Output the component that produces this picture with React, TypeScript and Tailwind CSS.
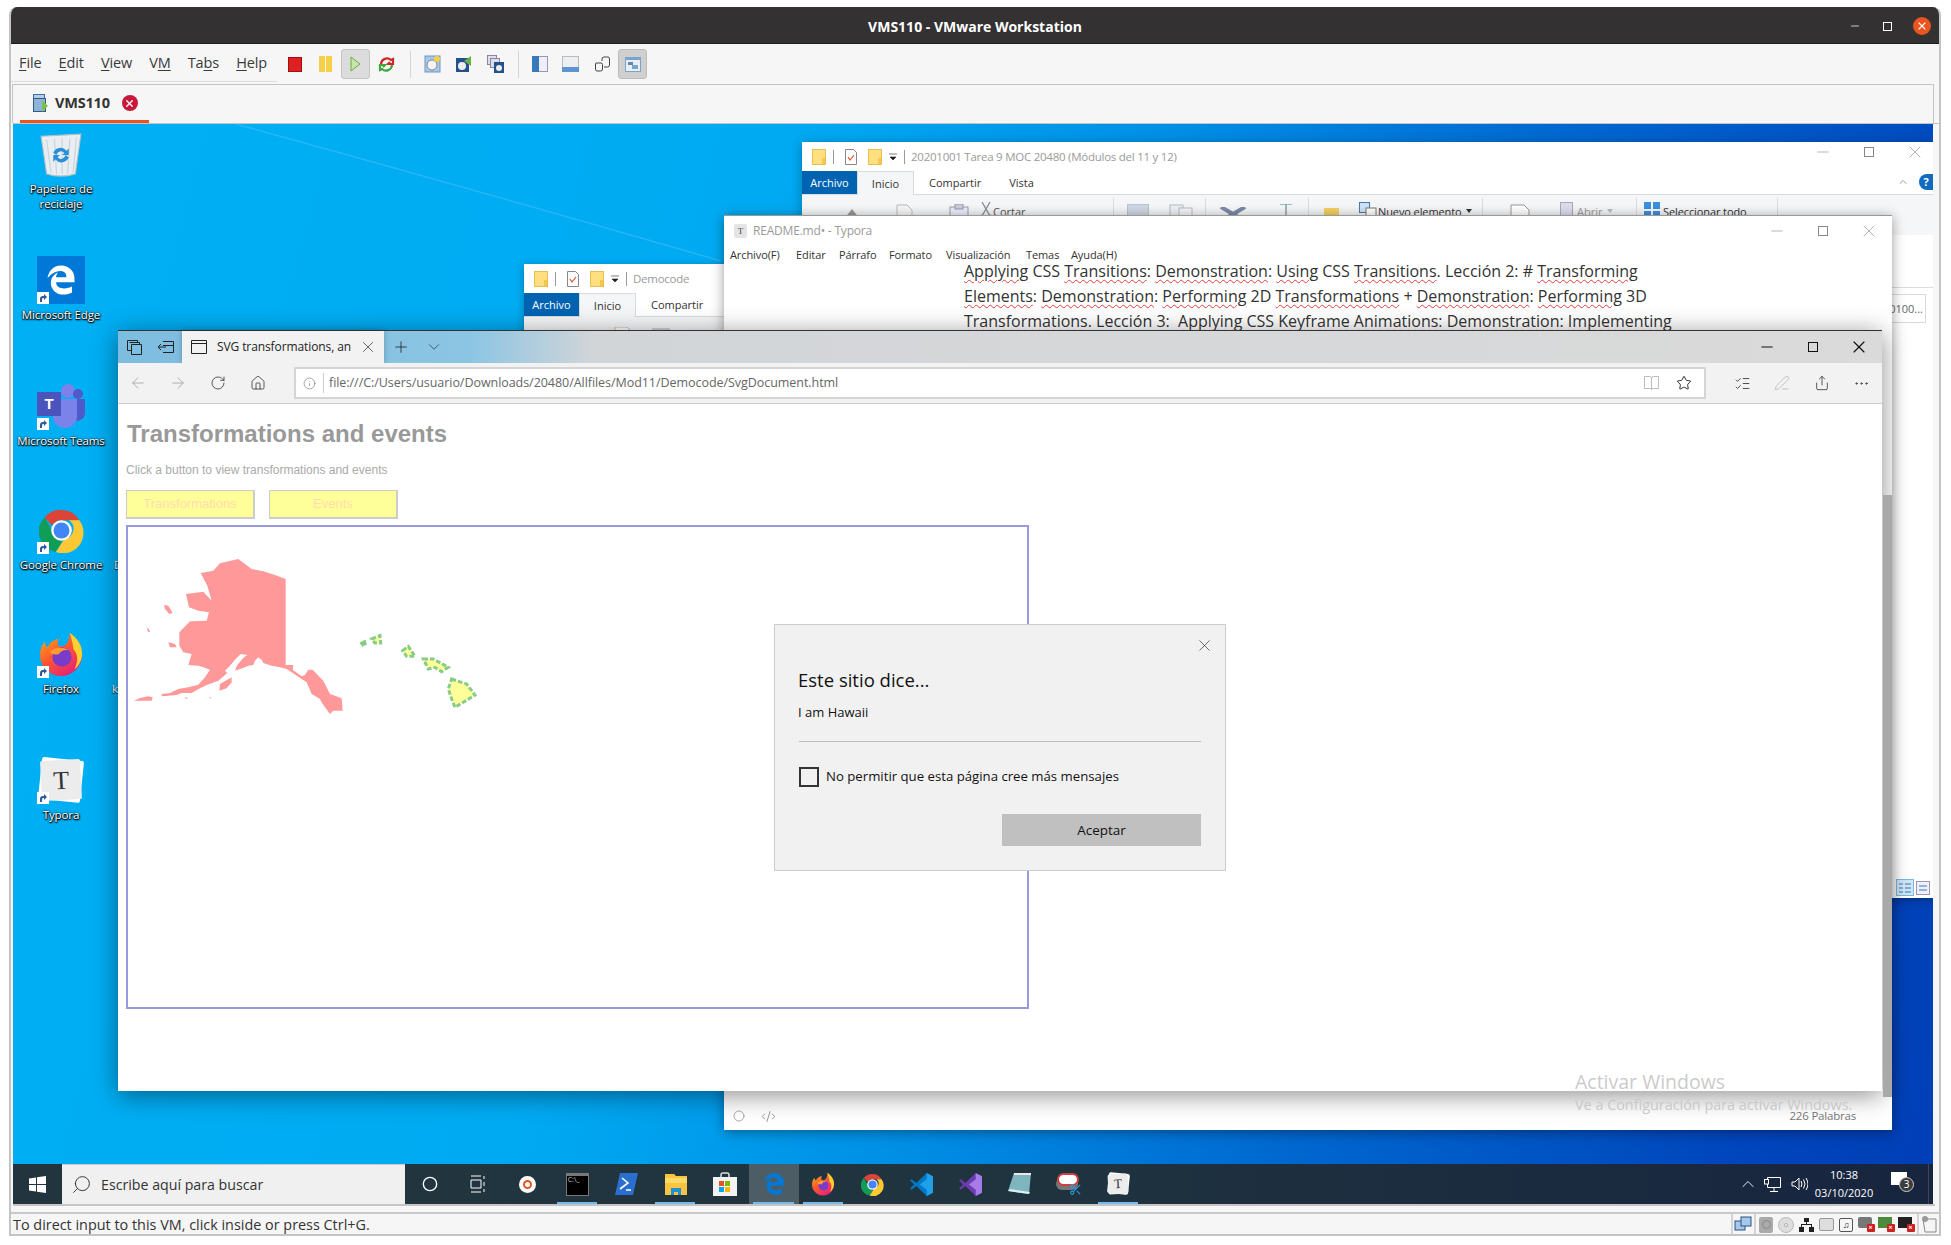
import React from "react";
import { ArrowLeft, ArrowRight, RotateCw, Home, Info, Star, Share, PenLine, Plus, ChevronDown, ChevronUp, Search, X, Minus, Code2, Circle, MoreHorizontal, Scissors, ListChecks } from "lucide-react";
import { FaEdgeLegacy } from "react-icons/fa";

function WinCtl({ tone, strong }: { tone: string; strong?: boolean }) {
  const sw = strong ? 1.4 : 0.8;
  return (
    <div className={`flex items-center ${tone}`}>
      <div className="w-[46px] flex justify-center"><Minus size={18} strokeWidth={sw} /></div>
      <div className="w-[46px] flex justify-center"><div className={`w-[10px] h-[10px] border-current ${strong ? "border-[1.5px]" : "border"}`} /></div>
      <div className="w-[46px] flex justify-center"><X size={20} strokeWidth={sw} /></div>
    </div>
  );
}

function Folder({ s = 14 }: { s?: number }) {
  return (
    <svg width={s} height={s + 2} viewBox="0 0 14 16"><rect x="0.5" y="0.5" width="13" height="15" fill="#ffdf80" stroke="#e8bf50" /><rect x="10" y="9" width="3" height="6" fill="#f4c84c" /></svg>
  );
}
function NoteCheck() {
  return (
    <svg width="12" height="16" viewBox="0 0 12 16"><path d="M.5.5h8l3 3v12H.5z" fill="#fff" stroke="#888" /><path d="M3 8l2 3 4-5" fill="none" stroke="#e0542a" strokeWidth="1.2" /></svg>
  );
}

function QuickAccess({ title }: { title: string }) {
  return (
    <div className="h-[30px] flex items-center pl-[10px] shrink-0">
      <Folder />
      <div className="w-px h-[14px] bg-[#999] ml-[7px] mr-[11px]" />
      <NoteCheck />
      <div className="ml-[11px]"><Folder /></div>
      <svg className="ml-[7px]" width="8" height="8" viewBox="0 0 8 8"><path d="M0 1h8M1 4h6l-3 3z" fill="#222" stroke="#222" strokeWidth=".6" /></svg>
      <div className="w-px h-[14px] bg-[#999] ml-[7px] mr-[6px]" />
      <span className="text-[11.5px] text-[#9a9a9a] whitespace-nowrap tracking-[-0.25px]">{title}</span>
    </div>
  );
}

function Ribbon({ vista }: { vista?: boolean }) {
  return (
    <div className="h-[23px] flex items-end border-b border-[#dadbdc] shrink-0 text-[11px] text-[#333]">
      <div className="w-[55px] h-[23px] bg-[#0063b1] text-white flex items-center justify-center pt-[2px]">Archivo</div>
      <div className="w-[57px] h-[24px] -mb-px bg-[#f5f6f7] border border-b-0 border-[#dadbdc] flex items-center justify-center pt-[2px]">Inicio</div>
      <div className="ml-[15px] h-[23px] flex items-center pt-[2px]">Compartir</div>
      {vista && <div className="ml-[28px] h-[23px] flex items-center pt-[2px]">Vista</div>}
    </div>
  );
}

function RibSep({ ml }: { ml: string }) {
  return <div className={`w-px h-[30px] bg-[#dcdcdc] -mt-[6px] shrink-0 ${ml}`} />;
}

function RibbonBack() {
  return (
    <div className="h-[40px] bg-[#f5f6f7] flex items-start pt-[9px] text-[11px] text-[#555] whitespace-nowrap">
      <svg className="ml-[42px] mt-[5px] shrink-0" width="16" height="10" viewBox="0 0 16 10"><path d="M8 0l8 10H0z" fill="#999" /></svg>
      <svg className="ml-[35px] shrink-0" width="20" height="18" viewBox="0 0 20 18"><path d="M2 1h10l5 5v12H2z" fill="#f7f7f7" stroke="#bbb" /></svg>
      <svg className="ml-[33px] shrink-0" width="22" height="18" viewBox="0 0 22 18"><rect x="2" y="3" width="18" height="15" fill="#eef" stroke="#99a" /><rect x="7" y="0" width="8" height="5" fill="#ccd" stroke="#99a" /></svg>
      <svg className="ml-[9px] -mt-[2px] shrink-0" width="14" height="18" viewBox="0 0 14 18"><path d="M3 0l8 14M11 0L3 14" stroke="#889" strokeWidth="1.3" /><circle cx="3" cy="15" r="2" fill="none" stroke="#889" /><circle cx="11" cy="15" r="2" fill="none" stroke="#889" /></svg>
      <span className="w-[120px] shrink-0">Cortar</span>
      <RibSep ml="" />
      <div className="ml-[13px] w-[22px] h-[18px] bg-[#cfd8e4] border border-[#b8c4d2] shrink-0" />
      <svg className="ml-[20px] shrink-0" width="24" height="18" viewBox="0 0 24 18"><rect x="1" y="1" width="13" height="17" fill="#eef1f5" stroke="#b6bcc6" /><rect x="10" y="4" width="13" height="14" fill="#f6f6f6" stroke="#b6bcc6" /></svg>
      <RibSep ml="ml-[12px]" />
      <svg className="ml-[13px] mt-[3px] shrink-0" width="28" height="14" viewBox="0 0 28 14"><path d="M2 0l24 14M26 0L2 14" stroke="#7b8aa8" strokeWidth="4" /></svg>
      <svg className="ml-[18px] shrink-0" width="30" height="18" viewBox="0 0 30 18"><path d="M2 12h26M15 0h12M21 0v12" stroke="#8aa" strokeWidth="1.6" fill="none" /></svg>
      <RibSep ml="ml-[13px]" />
      <div className="ml-[15px] mt-[4px] w-[15px] h-[14px] bg-[#f4d160] shrink-0" />
      <svg className="ml-[20px] -mt-[2px] shrink-0" width="18" height="18" viewBox="0 0 18 18"><rect x=".5" y=".5" width="10" height="10" fill="#cfe3f7" stroke="#4a79b0" /><rect x="7" y="6" width="10" height="12" fill="#fff" stroke="#777" /></svg>
      <span className="ml-[1px] w-[88px] shrink-0 text-[#333] tracking-[-0.1px]">Nuevo elemento</span>
      <svg className="mt-[5px] shrink-0" width="6" height="4" viewBox="0 0 6 4"><path d="M0 0h6L3 4z" fill="#333" /></svg>
      <RibSep ml="ml-[10px]" />
      <svg className="ml-[26px] shrink-0" width="22" height="18" viewBox="0 0 22 18"><path d="M2 1h13l5 5v12H2z" fill="#fff" stroke="#999" /></svg>
      <svg className="ml-[29px] -mt-[2px] shrink-0" width="13" height="18" viewBox="0 0 13 18"><rect x=".5" y=".5" width="12" height="17" fill="#dde" stroke="#aab" /></svg>
      <span className="ml-[4px] w-[28px] shrink-0 text-[#999]">Abrir</span>
      <svg className="ml-[2px] mt-[5px] shrink-0" width="6" height="4" viewBox="0 0 6 4"><path d="M0 0h6L3 4z" fill="#bbb" /></svg>
      <RibSep ml="ml-[23px]" />
      <svg className="ml-[7px] -mt-[2px] shrink-0" width="16" height="16" viewBox="0 0 16 16"><path d="M0 0h7v7H0zM9 0h7v7H9zM0 9h7v7H0zM9 9h7v7H9z" fill="#3c8fe0" /></svg>
      <span className="ml-[3px] w-[90px] shrink-0 text-[#333] tracking-[-0.1px]">Seleccionar todo</span>
      <RibSep ml="ml-[24px]" />
    </div>
  );
}

function Sp({ children }: { children: React.ReactNode }) {
  return <span className="underline decoration-wavy decoration-[#e04040] decoration-1 underline-offset-2">{children}</span>;
}

function ChromeIcon({ s }: { s: number }) {
  return (
    <svg width={s} height={s} viewBox="0 0 48 48">
      <path d="M24 2a22 22 0 0 1 19 11H24a11 11 0 0 0-10 6L6 10A22 22 0 0 1 24 2z" fill="#db4437" />
      <path d="M6 10l9 16a11 11 0 0 0 10 9l-7 12A22 22 0 0 1 6 10z" fill="#0f9d58" />
      <path d="M43 13a22 22 0 0 1-25 34l9-14a11 11 0 0 0 5-20z" fill="#fcc934" />
      <circle cx="24" cy="24" r="11" fill="#fff" />
      <circle cx="24" cy="24" r="8.5" fill="#4285f4" />
    </svg>
  );
}
function FirefoxIcon({ s, id }: { s: number; id: string }) {
  return (
    <svg width={s} height={s} viewBox="0 0 48 48">
      <defs>
        <linearGradient id={id} x1="0" y1="0" x2="0.7" y2="1"><stop offset="0" stopColor="#ffb520" /><stop offset=".5" stopColor="#ff5a2c" /><stop offset="1" stopColor="#e6207a" /></linearGradient>
      </defs>
      <path d="M33 2c6 5 13 13 13 23a22 22 0 0 1-44 0c0-6 2-10 5-14 0 3 1 5 3 6 2-5 6-8 12-9-2 3-2 6 0 8 5 0 10 0 11-14z" fill={`url(#${id})`} />
      <path d="M33 2c7 4 14 13 13 24-1 6-4 11-8 14 4-8 4-16-1-21-1-7-2-12-4-17z" fill="#ffd030" />
      <circle cx="25" cy="27" r="10" fill="#7a3cc8" />
      <path d="M12 22c5-5 13-6 20-2-5-1-9 1-10 4-3 1-7 1-10-2z" fill="#ff9a2c" />
    </svg>
  );
}
function TyporaIcon({ s }: { s: number }) {
  const fs = Math.round(s * 0.55);
  return (
    <div className="relative" style={{ width: s, height: s }}>
      <div className="absolute inset-[6%] bg-white rotate-6 rounded-[2px]" />
      <div className="absolute inset-[8%] bg-[#ececec] -rotate-3 rounded-[2px] flex items-center justify-center font-['Liberation_Serif',serif] text-[#333]" style={{ fontSize: fs }}>T</div>
    </div>
  );
}
function Shortcut() {
  return (
    <div className="absolute left-0 bottom-0 w-[12px] h-[12px] bg-white flex items-center justify-center">
      <svg width="10" height="10" viewBox="0 0 10 10"><path d="M2 9V6q0-3 3-3h1V1l3 3-3 3V5H5Q4 5 4 7v2z" fill="#2c5a9a" /></svg>
    </div>
  );
}

function DeskIcon({ top, lines, children, arrow = true }: { top: number; lines: string[]; children: React.ReactNode; arrow?: boolean }) {
  return (
    <div className="absolute left-0 w-[96px] flex flex-col items-center" style={{ top }}>
      <div className="relative w-[48px] h-[48px] flex items-center justify-center">
        {children}
        {arrow && <Shortcut />}
      </div>
      <div className="mt-[3px] text-center text-white text-[11.5px] leading-[15px] tracking-[-0.1px] [text-shadow:0_1px_1px_#000,0_0_2px_#000,1px_1px_2px_#000] whitespace-nowrap">
        {lines.map((l) => <div key={l}>{l}</div>)}
      </div>
    </div>
  );
}

function TeamsIcon() {
  return (
    <svg width="48" height="44" viewBox="0 0 48 44">
      <circle cx="31" cy="7" r="7" fill="#7b83eb" />
      <circle cx="41" cy="10" r="5" fill="#5059c9" />
      <path d="M34 15h14v14a8 8 0 0 1-14 5z" fill="#5059c9" />
      <path d="M16 15h24v17a12 12 0 0 1-24 0z" fill="#7b83eb" />
    </svg>
  );
}

function Cell({ children, mark, active }: { children: React.ReactNode; mark?: boolean; active?: boolean }) {
  return (
    <div className={`relative w-[49.2px] h-[40px] flex items-center justify-center ${active ? "bg-[#4d5d66]" : ""}`}>
      {children}
      {mark && <div className="absolute bottom-0 left-[4px] right-[5px] h-[2px] bg-[#76b9ed]" />}
    </div>
  );
}

function VsCode({ s, a, b }: { s: number; a: string; b: string }) {
  return (
    <svg width={s} height={s} viewBox="0 0 24 24">
      <path d="M17 1l6 3v16l-6 3-10-9.5L2.5 17 1 15.8 5 12 1 8.2l1.5-1.2L7 10.500z" fill={a} />
      <path d="M17 1l6 3v16l-6 3zM17 7l-6.500 5 6.500 5z" fill={b} fillRule="evenodd" />
    </svg>
  );
}

function Taskbar() {
  return (
    <div className="absolute left-0 right-0 bottom-0 h-[40px] flex items-center bg-[linear-gradient(90deg,#22353f_0%,#20343f_50%,#17253f_100%)] text-white">
      <div className="w-[49px] h-full flex items-center justify-center">
        <svg width="17" height="17" viewBox="0 0 17 17"><path d="M0 2.500l7-1v6.500H0zM8 1.300L17 0v8H8zM0 9h7v6.500l-7-1zM8 9h9v8l-9-1.300z" fill="#fff" /></svg>
      </div>
      <div className="w-[343px] h-full bg-[#f0f0f0] flex items-center text-[#333] border-t border-[#ccc]">
        <Search size={21} strokeWidth={1.1} className="ml-[9px] -scale-x-100" />
        <span className="ml-[9px] text-[14.2px]">Escribe aquí para buscar</span>
      </div>
      <Cell><Circle size={16} strokeWidth={2} /></Cell>
      <Cell>
        <svg width="18" height="18" viewBox="0 0 18 18" fill="none" stroke="#fff"><path d="M1 1h10M1 17h10M1 5h10v8H1zM14 1v3M14 7v4M14 14v3" /></svg>
      </Cell>
      <Cell>
        <div className="w-[17px] h-[17px] rounded-full bg-white flex items-center justify-center"><div className="w-[9px] h-[9px] rounded-full border-2 border-[#e95420]" /></div>
      </Cell>
      <Cell mark>
        <div className="w-[23px] h-[23px] bg-black border-t-[3px] border-[#777] border-x border-b text-[7px] leading-[8px] pl-[1px] text-[#ccc]">C:\_</div>
      </Cell>
      <Cell>
        <svg width="23" height="24" viewBox="0 0 23 24"><path d="M5 1h18l-5 22H0z" fill="#2a6fd0" /><path d="M7 6l6 5-8 6M11 18h5" stroke="#fff" strokeWidth="1.6" fill="none" /></svg>
      </Cell>
      <Cell mark>
        <svg width="22" height="24" viewBox="0 0 22 24"><path d="M0 2h9l2 2h11v19H0z" fill="#f9c440" /><path d="M0 6h22v5H0z" fill="#ffd966" /><path d="M6 23v-7h10v7h-3v-3H9v3z" fill="#1f8fd8" /></svg>
      </Cell>
      <Cell>
        <svg width="24" height="24" viewBox="0 0 24 24"><path d="M8 5V3a2 2 0 0 1 2-2h4a2 2 0 0 1 2 2v2" fill="none" stroke="#ddd" strokeWidth="1.500" /><path d="M0 5h24v19H0z" fill="#f3f3f3" /><path d="M6 9h5v5H6z" fill="#e8512a" /><path d="M12 9h5v5h-5z" fill="#7fba00" /><path d="M6 15h5v5H6z" fill="#00a4ef" /><path d="M12 15h5v5h-5z" fill="#ffb900" /></svg>
      </Cell>
      <Cell mark active><FaEdgeLegacy size={22} color="#0078d7" /></Cell>
      <Cell mark><FirefoxIcon s={24} id="ff2" /></Cell>
      <Cell><ChromeIcon s={23} /></Cell>
      <Cell><VsCode s={25} a="#0078c8" b="#20a0e8" /></Cell>
      <Cell><VsCode s={25} a="#6c3cb0" b="#a87ce8" /></Cell>
      <Cell>
        <svg width="24" height="24" viewBox="0 0 24 24"><path d="M6 1h17l-2 21L0 19z" fill="#7fb5bf" /><path d="M0 19l21 3 1-2-20-3z" fill="#d8eef0" /><path d="M6 1h17v2H6z" fill="#e8e8e8" /></svg>
      </Cell>
      <Cell>
        <div className="relative w-[26px] h-[24px]">
          <div className="absolute left-0 top-[6px] w-[22px] h-[12px] rounded-full bg-[#777]" />
          <div className="absolute left-[1px] top-[1px] w-[22px] h-[13px] rounded-full bg-white border-2 border-[#d04040]" />
          <Scissors size={13} color="#2a9ad8" className="absolute right-0 bottom-0" />
        </div>
      </Cell>
      <Cell mark><TyporaIcon s={24} /></Cell>
      <div className="ml-auto flex items-center h-full">
        <ChevronUp size={20} strokeWidth={1.1} />
        <svg className="ml-[6px]" width="17" height="15" viewBox="0 0 17 15" fill="none" stroke="#fff"><path d="M3.500 2.500V.5h13v10h-13V7M6 14.500h8M10 10.500v4" /><rect x=".5" y="2.500" width="4" height="4.500" /></svg>
        <svg className="ml-[10px]" width="17" height="14" viewBox="0 0 17 14" fill="none" stroke="#fff"><path d="M1 5h3l4-4v12l-4-4H1zM10 4q2 3 0 6M12.500 2.500q3 4.500 0 9M15 1q4 6 0 12" /></svg>
        <div className="ml-[5px] w-[62px] flex flex-col items-center text-[11px] leading-[18px]">
          <span>10:38</span>
          <span className="whitespace-nowrap">03/10/2020</span>
        </div>
        <div className="relative ml-[16px] w-[18px] h-[18px] mb-[6px]">
          <div className="w-[16px] h-[13px] bg-white" />
          <div className="absolute left-[8px] top-[5px] w-[15px] h-[15px] rounded-full bg-[#3c3c3c] border border-[#ccc] text-[10px] leading-[13px] text-center">3</div>
        </div>
        <div className="ml-[19px] w-px h-full bg-[#445]" />
        <div className="w-[4px]" />
      </div>
    </div>
  );
}

function Explorer() {
  return (
    <div className="absolute left-[789px] top-[18px] w-[1131px] h-[756px] bg-white shadow-[0_2px_10px_rgba(0,0,0,.3)] flex flex-col overflow-hidden">
      <div className="flex justify-between">
        <QuickAccess title="20201001 Tarea 9 MOC 20480 (Módulos del 11 y 12)" />
        <div className="-mr-[5px]"><WinCtl tone="text-[#888]" /></div>
      </div>
      <div className="relative">
        <Ribbon vista />
        <div className="absolute right-0 top-[2px] flex items-center gap-[10px]">
          <ChevronUp size={12} color="#999" />
          <div className="w-[14px] h-[16px] rounded-l-full bg-[#0f6ac0] text-white text-[11px] font-bold leading-[16px] text-center">?</div>
        </div>
      </div>
      <RibbonBack />
      <div className="border-t border-[#dcdcdc] mt-[52px] flex justify-end pt-[6px] pr-[7px]">
        <div className="w-[40px] h-[29px] border border-[#d9d9d9] text-[11px] text-[#666] leading-[27px] text-right pr-[2px]">0100...</div>
      </div>
      <div className="mt-auto h-[21px] flex justify-end items-center pr-[3px] gap-[2px]">
        <svg width="18" height="17" viewBox="0 0 18 17"><rect x=".5" y=".5" width="17" height="16" fill="#cfe6f7" stroke="#7cb8e0" /><path d="M3 5h4M9 5h6M3 9h4M9 9h6M3 13h4M9 13h6" stroke="#3878b0" /></svg>
        <svg width="14" height="14" viewBox="0 0 14 14"><rect x=".5" y=".5" width="13" height="13" fill="#eef" stroke="#99a" /><path d="M3 5h8M3 9h8" stroke="#3878b0" /></svg>
      </div>
    </div>
  );
}

function Democode() {
  return (
    <div className="absolute left-[511px] top-[140px] w-[240px] h-[90px] bg-white shadow-[0_2px_8px_rgba(0,0,0,.3)] flex flex-col">
      <QuickAccess title="Democode" />
      <Ribbon />
      <div className="flex-1 bg-[#f5f6f7] flex items-start pl-[90px] pt-[10px] gap-[20px]">
        <svg width="18" height="10" viewBox="0 0 18 10"><path d="M1 0h12l4 4v6H1z" fill="#fff" stroke="#bbb" /></svg>
        <svg width="18" height="10" viewBox="0 0 18 10"><rect x="1" y="2" width="16" height="8" fill="#eef" stroke="#aab" /></svg>
      </div>
    </div>
  );
}

function Typora() {
  return (
    <div className="absolute left-[711px] top-[91px] w-[1168px] h-[915px] bg-white shadow-[0_2px_12px_rgba(0,0,0,.4)] flex flex-col border-t border-[#999] overflow-hidden">
      <div className="h-[29px] flex items-center shrink-0">
        <div className="ml-[10px] w-[13px] h-[14px] bg-[#e4e4e4] rounded-[2px] text-[9px] font-['Liberation_Serif',serif] text-[#444] text-center leading-[14px]">T</div>
        <span className="ml-[6px] text-[12px] text-[#9a9a9a] tracking-[-0.2px]">README.md• - Typora</span>
        <div className="ml-auto"><WinCtl tone="text-[#888]" /></div>
      </div>
      <div className="h-[20px] flex items-center pl-[6px] text-[11px] text-[#333] shrink-0 tracking-[-0.1px] relative z-10 bg-white">
        <span className="w-[66px]">Archivo(F)</span>
        <span className="w-[43px]">Editar</span>
        <span className="w-[50px]">Párrafo</span>
        <span className="w-[57px]">Formato</span>
        <span className="w-[80px]">Visualización</span>
        <span className="w-[45px]">Temas</span>
        <span>Ayuda(H)</span>
      </div>
      <div className="flex-1 pl-[240px] text-[16px] leading-[25px] text-[#333] whitespace-pre -mt-[6px] overflow-hidden">
        <div><Sp>Applying</Sp> CSS <Sp>Transitions</Sp>: <Sp>Demonstration</Sp>: <Sp>Using</Sp> CSS <Sp>Transitions</Sp>. Lección 2: # <Sp>Transforming</Sp></div>
        <div><Sp>Elements</Sp>: <Sp>Demonstration</Sp>: <Sp>Performing</Sp> 2D <Sp>Transformations</Sp> + <Sp>Demonstration</Sp>: <Sp>Performing</Sp> 3D</div>
        <div><Sp>Transformations</Sp>. Lección 3:  <Sp>Applying</Sp> CSS <Sp>Keyframe</Sp> <Sp>Animations</Sp>: <Sp>Demonstration</Sp>: <Sp>Implementing</Sp></div>
      </div>
      <div className="h-[28px] flex items-center shrink-0 text-[#777]">
        <Circle size={12} strokeWidth={1.2} className="ml-[9px]" />
        <Code2 size={15} strokeWidth={1.2} className="ml-[16px]" />
        <span className="ml-auto mr-[36px] text-[11.5px] tracking-[-0.2px]">226 Palabras</span>
      </div>
    </div>
  );
}

function Hawaii() {
  const isl = [
    "995,420 1040,435 1065,468 1030,490 1005,505 995,480 985,450",
    "910,360 940,360 985,385 965,398 945,385 925,390",
    "848,335 865,322 885,352 860,352",
    "755,300 780,290 782,312 765,312",
  ];
  return (
    <g fill="#ffff99" stroke="#88cc88" strokeWidth="9" strokeDasharray="14 6">
      {isl.map((p) => <polygon key={p} points={p} />)}
      <polygon points="722,312 735,305 738,315 728,320" fill="#88cc88" strokeDasharray="none" strokeWidth="5" />
    </g>
  );
}

function MapSvg() {
  return (
    <svg width="899" height="480" viewBox="-1 0 899 480" className="block">
      <g transform="translate(-9 12) scale(0.3333)">
        <g fill="#ff9999">
          <path d="M497 120V378H520L518 392L545 412L555 408L565 392L578 392L610 425L630 465L665 478L668 515L640 515L630 525L615 505L605 490L600 480L575 465L560 430L545 420L515 400L500 390L480 385L455 380L430 372L425 362L415 355L405 365L400 378L385 380L375 385L345 395L352 378L372 355L382 348L362 345L345 362L330 380L315 395L322 402L295 425L262 437L240 448L215 462L185 462L170 468L145 470L125 472L125 465L150 462L175 450L205 445L235 437L255 415L270 392L250 385L235 380L205 378L215 345L190 340L178 320L178 280L210 247L260 245L267 220L235 215L207 205L198 165L250 158L275 185L262 140L242 102L280 95L300 73L355 60L395 90L430 97L465 108Z" />
          <path d="M132 198L145 200L158 222L148 225L135 210Z" />
          <path d="M145 310L165 315L170 325L150 325Z" />
          <path d="M80 268L85 268L90 278L85 280Z" />
          <path d="M300 435L335 415L335 430L320 448L298 455Z" />
          <path d="M42 485L60 477L85 472L98 475L95 485L60 485Z" />
          <path d="M192 475L205 477L200 480Z" />
          <path d="M270 473L275 478L268 478Z" />
        </g>
        <Hawaii />
      </g>
    </svg>
  );
}

function Browser() {
  return (
    <div className="absolute left-[105px] top-[206px] w-[1764px] h-[761px] flex flex-col shadow-[0_4px_24px_rgba(0,0,0,.45)] border-t border-[#333] bg-white">
      <div className="h-[32px] flex items-end shrink-0 bg-[linear-gradient(90deg,#7dbde0_0%,#8cc5e3_20%,#d2d5d8_27%,#dadada_100%)] text-[#222]">
        <div className="w-[64px] h-full flex items-center pl-[9px] gap-[16px]">
          <svg width="15" height="15" viewBox="0 0 15 15" fill="none" stroke="#222"><path d="M.5.5h10v2M2.500 2.500h10v2M4.500 4.500h10v10h-10z" /><path d="M.5.500v10h4" /></svg>
          <svg width="16" height="12" viewBox="0 0 16 12" fill="none" stroke="#222"><path d="M5 .5h10.500v11H5M5 4.500h10M0 6h8M3 3L0 6l3 3" /></svg>
        </div>
        <div className="w-[202px] h-full bg-[#f2f2f2] flex items-center pl-[9px] shadow-[0_0_6px_rgba(0,0,0,.25)]">
          <svg width="16" height="14" viewBox="0 0 16 14" fill="none" stroke="#222"><path d="M.5.5h15v13H.5zM.5 3.500h15" /></svg>
          <span className="ml-[10px] w-[134px] overflow-hidden whitespace-nowrap text-[12px] tracking-[-0.1px]">SVG transformations, an</span>
          <X size={18} strokeWidth={0.9} className="ml-[8px]" />
        </div>
        <div className="h-full flex items-center">
          <Plus size={18} strokeWidth={1.1} className="ml-[8px]" />
          <ChevronDown size={18} strokeWidth={0.9} className="ml-[15px]" />
        </div>
        <div className="ml-auto h-full flex items-center"><WinCtl tone="text-[#111]" strong /></div>
      </div>
      <div className="h-[41px] bg-[#f2f2f2] border-b border-[#ccc] flex items-center shrink-0 text-[#333]">
        <ArrowLeft size={18} strokeWidth={1} color="#999" className="ml-[11px]" />
        <ArrowRight size={18} strokeWidth={1} color="#999" className="ml-[22px]" />
        <RotateCw size={16} strokeWidth={1.2} className="ml-[23px]" />
        <Home size={16} strokeWidth={1.2} className="ml-[24px]" />
        <div className="ml-[28px] w-[1412px] h-[32px] bg-white border-2 border-[#d4d4d4] flex items-center">
          <Info size={13} strokeWidth={1.2} color="#777" className="ml-[7px]" />
          <div className="w-px h-[20px] bg-[#ccc] ml-[7px]" />
          <span className="ml-[5px] text-[12.5px] text-[#666] tracking-[-0.05px] whitespace-nowrap">file:///C:/Users/usuario/Downloads/20480/Allfiles/Mod11/Democode/SvgDocument.html</span>
          <svg className="ml-auto" width="15" height="14" viewBox="0 0 15 14" fill="none" stroke="#bbb"><path d="M.5.5h5q2 0 2 1.500v11.500q0-1-2-1h-5zM14.500.5h-5q-2 0-2 1.500M14.500.5v12h-5q-2 0-2 1" /></svg>
          <Star size={16} strokeWidth={1.3} color="#111" className="ml-[17px] mr-[12px]" />
        </div>
        <ListChecks size={17} strokeWidth={1.2} className="ml-[28px]" />
        <PenLine size={16} strokeWidth={1} color="#aaa" className="ml-[23px]" />
        <Share size={16} strokeWidth={1.2} className="ml-[24px]" />
        <MoreHorizontal size={17} strokeWidth={1.2} className="ml-[23px]" />
      </div>
      <div className="relative flex-1 pl-[8px] font-['Liberation_Sans',sans-serif]">
        <h1 className="mt-[16px] ml-[1px] text-[24px] leading-[28px] font-bold text-[#999]">Transformations and events</h1>
        <p className="mt-[15px] text-[12px] leading-[14px] text-[#aaa]">Click a button to view transformations and events</p>
        <div className="mt-[13px] flex gap-[14px]">
          <div className="w-[129px] h-[29px] bg-[#ffff99] border-r-2 border-b-2 border-[#ccc] border-l border-t text-[#ffdcb0] text-[13px] flex items-center justify-center">Transformations</div>
          <div className="w-[129px] h-[29px] bg-[#ffff99] border-r-2 border-b-2 border-[#ccc] border-l border-t text-[#ffdcb0] text-[13px] flex items-center justify-center">Events</div>
        </div>
        <div className="mt-[6px] w-[903px] h-[484px] border-2 border-[#9999dd]">
          <MapSvg />
        </div>
        <Dialog />
      </div>
    </div>
  );
}

function Dialog() {
  return (
    <div className="absolute left-[656px] top-[220px] w-[452px] h-[247px] bg-[#f1f1f1] border border-[#ccc] font-['Open_Sans',sans-serif] text-[#111] flex flex-col pl-[23px] pr-[24px]">
      <X size={19} strokeWidth={0.9} className="absolute right-[11px] top-[11px] text-[#333]" />
      <div className="mt-[42px] text-[18.5px] leading-[26px]">Este sitio dice...</div>
      <div className="mt-[10px] text-[13px] leading-[18px]">I am Hawaii</div>
      <div className="mt-[20px] h-px bg-[#bdbdbd] ml-[1px]" />
      <div className="mt-[25px] ml-[1px] flex items-center">
        <div className="w-[20px] h-[20px] border-2 border-[#333]" />
        <span className="ml-[7px] text-[13.2px] whitespace-nowrap">No permitir que esta página cree más mensajes</span>
      </div>
      <div className="mt-[27px] self-end w-[199px] h-[32px] bg-[#c0c0c0] text-[13.5px] flex items-center justify-center">Aceptar</div>
    </div>
  );
}

function Desktop() {
  return (
    <div className="relative w-[1920px] h-[1080px] overflow-hidden bg-[linear-gradient(105deg,#00b0f4_0%,#00aaf2_35%,#0090e6_52%,#0068d0_70%,#0046bc_90%,#003eb6_100%)]">
      <svg className="absolute inset-0" width="1920" height="1080" viewBox="0 0 1920 1080">
        <path d="M223 0Q470 68 708 137" stroke="#5ec6f4" strokeWidth="1.500" fill="none" opacity=".4" />
      </svg>
      <DeskIcon top={6} lines={["Papelera de", "reciclaje"]} arrow={false}>
        <svg width="42" height="48" viewBox="0 0 38 42">
          <path d="M1 5l36-2-5 36q-13 4-26 0z" fill="#e8eef2" stroke="#b5c0c8" />
          <path d="M6 8l4 30M13 7l2 32M20 7v32M27 7l-2 32M33 6l-3 32" stroke="#c9d3da" fill="none" />
          <path d="M12 20a7 7 0 0 1 12-2l2-2v6h-6l2-2a4 4 0 0 0-7 2zM26 24a7 7 0 0 1-12 2l-2 2v-6h6l-2 2a4 4 0 0 0 7-2z" fill="#2a8fd8" />
        </svg>
      </DeskIcon>
      <DeskIcon top={132} lines={["Microsoft Edge"]}>
        <div className="w-[48px] h-[48px] bg-[#0078d7] flex items-center justify-center"><FaEdgeLegacy size={30} color="#fff" /></div>
      </DeskIcon>
      <DeskIcon top={258} lines={["Microsoft Teams"]}>
        <TeamsIcon />
        <div className="absolute left-0 top-[10px] w-[24px] h-[24px] bg-[#4b53bc] text-white text-[15px] font-bold flex items-center justify-center font-['Liberation_Sans',sans-serif]">T</div>
      </DeskIcon>
      <DeskIcon top={382} lines={["Google Chrome"]}><ChromeIcon s={45} /></DeskIcon>
      <DeskIcon top={506} lines={["Firefox"]}><FirefoxIcon s={46} id="ff1" /></DeskIcon>
      <DeskIcon top={632} lines={["Typora"]}><TyporaIcon s={48} /></DeskIcon>
      <div className="absolute left-[101px] top-[433px] text-white text-[11.5px] leading-[15px] [text-shadow:0_1px_1px_#000]">D</div>
      <div className="absolute left-[99px] top-[557px] text-white text-[11.5px] leading-[15px] [text-shadow:0_1px_1px_#000]">k</div>
      <Democode />
      <Explorer />
      <Typora />
      <Browser />
      <div className="absolute left-[1562px] top-[945px] font-['Open_Sans',sans-serif] text-[#c4c4c4]/90 pointer-events-none">
        <div className="text-[19.5px] leading-[26px]">Activar Windows</div>
        <div className="text-[14.4px] leading-[20px] whitespace-nowrap">Ve a Configuración para activar Windows.</div>
      </div>
      <div className="absolute left-[1870px] top-[371px] w-[9px] h-[602px] bg-[#a9a9a9]" />
      <Taskbar />
    </div>
  );
}

function MenuItem({ pre = "", u, post = "" }: { pre?: string; u: string; post?: string }) {
  return <span>{pre}<u className="underline-offset-2">{u}</u>{post}</span>;
}

function Stat({ children }: { children: React.ReactNode }) {
  return <div className="w-[20px] h-[18px] flex items-center justify-center">{children}</div>;
}

export default function App() {
  const bad = <div className="absolute right-0 bottom-0 w-[8px] h-[8px] bg-[#d02020] text-white text-[7px] leading-[8px] text-center font-bold rounded-[1px]">×</div>;
  return (
    <div className="w-[1951px] h-[1245px] bg-white pt-[7px] pl-[9px] font-['Open_Sans','Noto_Sans',sans-serif] overflow-hidden">
      <div className="w-[1932px] h-[1229px] bg-[#f6f6f6] border-x-2 border-b-2 border-[#c4c4c4] rounded-t-[8px] flex flex-col overflow-hidden">
        <div className="h-[37px] bg-[#333132] border-b border-[#1c1c1c] flex items-center justify-center relative shrink-0 text-white text-[14px] font-bold pt-[2px]">
          <span>VMS110 - VMware Workstation</span>
          <div className="absolute right-[8px] top-[10px] flex items-center">
            <Minus size={12} strokeWidth={1.5} />
            <div className="ml-[22px] w-[9px] h-[9px] border border-white" />
            <div className="ml-[21px] w-[18px] h-[18px] rounded-full bg-[#e95420] flex items-center justify-center"><X size={12} strokeWidth={2.2} /></div>
          </div>
        </div>
        <div className="h-[40px] flex items-center shrink-0 text-[14.5px] text-[#3a3a3a]">
          <div className="flex items-center h-[38px] border-b border-[#ddd] w-[266px] gap-[17px] pl-[8px] tracking-[-0.1px] self-start">
            <MenuItem u="F" post="ile" />
            <MenuItem u="E" post="dit" />
            <MenuItem u="V" post="iew" />
            <MenuItem pre="V" u="M" />
            <MenuItem pre="Ta" u="b" post="s" />
            <MenuItem u="H" post="elp" />
          </div>
          <div className="ml-[11px] w-[14px] h-[15px] bg-[#e02020] border border-[#a01010]" />
          <div className="ml-[17px] flex gap-[1px]"><div className="w-[6px] h-[16px] bg-[#f7d04a]" /><div className="w-[6px] h-[16px] bg-[#f7d04a]" /></div>
          <div className="ml-[9px] w-[29px] h-[30px] bg-[#dcdcdc] border border-[#c4c4c4] rounded-[3px] flex items-center justify-center">
            <svg width="11" height="16" viewBox="0 0 11 16"><path d="M1 1l9 7-9 7z" fill="#c6e5a6" stroke="#6fa84a" /></svg>
          </div>
          <svg className="ml-[8px]" width="17" height="17" viewBox="0 0 17 17" fill="none"><path d="M3 8a6 6 0 0 1 10-4l2-1v5h-5l2-2" stroke="#d02828" strokeWidth="2.200" /><path d="M14 9a6 6 0 0 1-10 4l-2 1V9h5l-2 2" stroke="#3ea83e" strokeWidth="2.200" /></svg>
          <div className="ml-[15px] w-px h-[27px] bg-[#d4d4d4]" />
          <svg className="ml-[13px]" width="17" height="18" viewBox="0 0 17 18"><rect x="1" y="1" width="15" height="16" fill="#a8c8e8" stroke="#6f94bc" /><circle cx="8" cy="10" r="5" fill="#f4f4f4" stroke="#888" /><circle cx="13" cy="4" r="3" fill="#f7d04a" /></svg>
          <svg className="ml-[14px]" width="17" height="18" viewBox="0 0 17 18"><rect x="1" y="3" width="13" height="14" fill="#24508c" /><circle cx="7" cy="11" r="4" fill="#eee" /><path d="M16 1v10l-7-5z" fill="#6ab04a" /></svg>
          <svg className="ml-[15px]" width="17" height="18" viewBox="0 0 17 18"><rect x=".5" y=".5" width="9" height="9" fill="#dde" stroke="#889" /><rect x="3.500" y="3.500" width="9" height="9" fill="#dde" stroke="#889" /><rect x="7" y="7" width="10" height="11" fill="#24508c" /><circle cx="12" cy="13" r="3" fill="#eee" /></svg>
          <div className="ml-[14px] w-px h-[27px] bg-[#d4d4d4]" />
          <svg className="ml-[13px]" width="16" height="16" viewBox="0 0 16 16"><rect x=".5" y=".5" width="15" height="15" fill="#eef" stroke="#99a" /><rect x="0" y="0" width="7" height="16" fill="#3a78b8" /></svg>
          <svg className="ml-[14px]" width="17" height="16" viewBox="0 0 17 16"><rect x=".5" y=".5" width="16" height="15" fill="#eceff2" stroke="#bbb" /><rect x="0" y="11" width="17" height="5" fill="#5c94d0" /></svg>
          <svg className="ml-[16px]" width="15" height="16" viewBox="0 0 15 16" fill="none" stroke="#444"><path d="M7 5V3q0-2 2-2h4q1.500 0 1.500 2v6q0 2-2 2H9M1 7h5q1.500 0 1.500 1.500V13q0 2-2 2H2q-1.500 0-1.500-2V8q0-1 .5-1z" /></svg>
          <div className="ml-[8px] w-[29px] h-[30px] bg-[#cfcfcf] border border-[#bcbcbc] rounded-[3px] flex items-center justify-center">
            <svg width="16" height="15" viewBox="0 0 16 15"><rect width="16" height="15" fill="#7aa4cc" /><rect x="1" y="3" width="14" height="11" fill="#e8eef4" /><rect x="3" y="5" width="5" height="3" fill="#5c88b4" /><rect x="7" y="8" width="6" height="4" fill="#7aa4cc" /></svg>
          </div>
        </div>
        <div className="h-[39px] ml-[1px] mr-[5px] border-x border-t border-[#c4c4c4] flex flex-col shrink-0">
          <div className="flex-1 flex items-center pl-[20px] pt-[1px] text-[14.5px] font-bold text-[#333]">
            <svg width="15" height="18" viewBox="0 0 15 18"><rect x=".5" y=".5" width="11" height="8" fill="#b6cde4" stroke="#3a6ea5" /><rect x=".5" y="4.500" width="12" height="13" fill="#8fb4d8" stroke="#2a5a90" /><path d="M9 6l6 6-6 6z" fill="#7cc04a" /></svg>
            <span className="ml-[7px] tracking-[-0.2px]">VMS110</span>
            <div className="ml-[12px] w-[16px] h-[16px] rounded-full bg-[#c8183c] flex items-center justify-center"><X size={11} color="#fff" strokeWidth={3} /></div>
          </div>
          <div className="ml-[7px] w-[129px] h-[3px] bg-[#e95420]" />
        </div>
        <div className="ml-[2px] border-t border-[#c4c4c4] shrink-0"><Desktop /></div>
        <div className="h-[2px] bg-[#c4c4c4] ml-[2px] mr-[4px] shrink-0" />
        <div className="h-[6px] shrink-0" />
        <div className="flex-1 border-t-2 border-[#c8c8c8] flex items-center pl-[2px] pb-[2px] text-[14.4px] text-[#333]">
          <span>To direct input to this VM, click inside or press Ctrl+G.</span>
          <div className="ml-auto flex items-center h-full">
            <div className="w-[2px] h-full bg-[#d4d4d4]" />
            <svg className="mx-[1px]" width="18" height="18" viewBox="0 0 18 18"><rect x="1" y="5" width="10" height="9" fill="#a8c8e8" stroke="#24508c" /><rect x="7" y="1" width="10" height="9" fill="#a8c8e8" stroke="#24508c" /></svg>
            <div className="w-[2px] h-full bg-[#d4d4d4] ml-[1px]" />
            <Stat><div className="w-[14px] h-[16px] rounded-[2px] bg-[#aaa] flex items-center justify-center"><div className="w-[9px] h-[9px] rounded-full border border-[#888]" /></div></Stat>
            <Stat><div className="w-[16px] h-[16px] rounded-full bg-[#ddd] border border-[#bbb] flex items-center justify-center"><div className="w-[4px] h-[4px] rounded-full bg-white border border-[#aaa]" /></div></Stat>
            <Stat>
              <svg width="15" height="14" viewBox="0 0 15 14" fill="#222"><path d="M5 0h5v4H8v2h5v3h2v5h-5V9h2V7H3v2h2v5H0V9h2V6h5V4H5z" /></svg>
            </Stat>
            <Stat><div className="w-[15px] h-[13px] bg-[#ddd] border border-[#999] rounded-[2px]" /></Stat>
            <Stat><div className="w-[14px] h-[14px] border border-[#555] rounded-[2px] text-[9px] leading-[12px] text-center text-[#222]">♫</div></Stat>
            <Stat><div className="relative w-[17px] h-[15px]"><div className="w-[14px] h-[11px] bg-[#777] rounded-[2px]" />{bad}</div></Stat>
            <Stat><div className="relative w-[17px] h-[15px]"><div className="w-[14px] h-[11px] bg-[#4c8a3c]" />{bad}</div></Stat>
            <Stat><div className="relative w-[17px] h-[15px]"><div className="w-[14px] h-[11px] bg-[#222]" />{bad}</div></Stat>
            <div className="w-[2px] h-full bg-[#d4d4d4] ml-[1px]" />
            <svg className="ml-[2px] mr-[2px]" width="16" height="17" viewBox="0 0 16 17"><path d="M2 3h13v13H4z" fill="#f5f5f5" stroke="#888" /><circle cx="4" cy="3" r="3" fill="#999" /></svg>
          </div>
        </div>
      </div>
    </div>
  );
}
